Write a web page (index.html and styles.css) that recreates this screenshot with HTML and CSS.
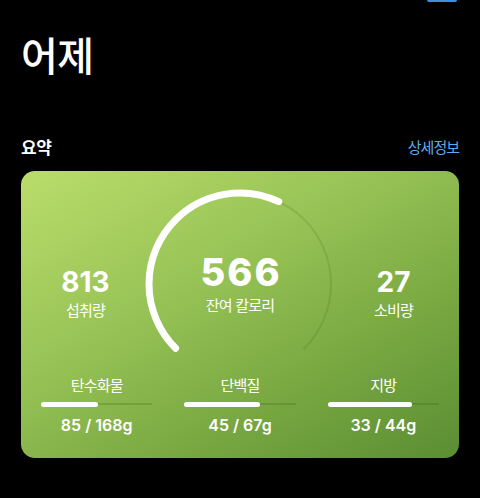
FILE: index.html
```html
<!DOCTYPE html>
<html lang="ko">
<head>
<meta charset="utf-8">
<link rel="stylesheet" href="styles.css">
</head>
<body>
<div class="page">
  <div class="topbar"><div class="topbtn"></div></div>
  <h1 class="title">어제</h1>
  <div class="section-head">
    <span class="section-title">요약</span>
    <span class="section-link">상세정보</span>
  </div>
  <div class="card">
    <div class="stats">
      <div class="stat stat-left">
        <div class="stat-num">813</div>
        <div class="stat-label">섭취량</div>
      </div>
      <div class="gauge">
        <svg class="gauge-svg" width="196" height="196" viewBox="0 0 196 196">
          <circle cx="98" cy="98" r="91" fill="none" stroke="rgba(40,80,10,0.14)" stroke-width="2" stroke-dasharray="428.8 600" transform="rotate(135 98 98)" stroke-linecap="round"/>
          <circle cx="98" cy="98" r="91" fill="none" stroke="#ffffff" stroke-width="7" stroke-dasharray="254 600" transform="rotate(135 98 98)" stroke-linecap="round"/>
        </svg>
        <div class="gauge-num">566</div>
        <div class="stat-label">잔여 칼로리</div>
      </div>
      <div class="stat stat-right">
        <div class="stat-num">27</div>
        <div class="stat-label">소비량</div>
      </div>
    </div>
    <div class="macros">
      <div class="macro">
        <div class="macro-label">탄수화물</div>
        <div class="bar"><div class="bar-fill" style="width:51%"></div></div>
        <div class="macro-val">85 / 168g</div>
      </div>
      <div class="macro">
        <div class="macro-label">단백질</div>
        <div class="bar"><div class="bar-fill" style="width:68%"></div></div>
        <div class="macro-val">45 / 67g</div>
      </div>
      <div class="macro">
        <div class="macro-label">지방</div>
        <div class="bar"><div class="bar-fill" style="width:76%"></div></div>
        <div class="macro-val">33 / 44g</div>
      </div>
    </div>
  </div>
</div>
</body>
</html>
```
FILE: styles.css
```css
html, body {
  margin: 0;
  padding: 0;
  background: #000;
  color: #fff;
  font-family: Inter, "Noto Sans CJK KR", sans-serif;
}
.page {
  width: 480px;
  height: 498px;
  padding: 0 21px;
  box-sizing: border-box;
  overflow: hidden;
}
.topbar {
  display: flex;
  justify-content: flex-end;
  height: 2px;
  padding-right: 2px;
}
.topbtn {
  width: 30px;
  height: 2px;
  background: #3f8fe0;
  border-radius: 0 0 2px 2px;
}
.title {
  margin: 26px 0 0 0;
  font-family: "Noto Sans CJK KR", sans-serif;
  font-size: 40px;
  font-weight: 500;
  line-height: 52px;
  letter-spacing: -0.5px;
}
.section-head {
  display: flex;
  justify-content: space-between;
  align-items: center;
  margin-top: 54px;
  height: 24px;
}
.section-title {
  font-family: "Noto Sans CJK KR", sans-serif;
  font-size: 17px;
  font-weight: 700;
  letter-spacing: -0.5px;
}
.section-link {
  font-family: "Noto Sans CJK KR", sans-serif;
  font-size: 15px;
  color: #5aaef0;
  letter-spacing: -1px;
}
.card {
  margin-top: 13px;
  height: 287px;
  border-radius: 14px;
  background: linear-gradient(150deg, #badd6b 0%, #96c255 40%, #78a741 70%, #5a8e33 100%);
  display: flex;
  flex-direction: column;
}
.stats {
  display: grid;
  grid-template-columns: 1fr 196px 1fr;
  padding: 15px 0 0 0;
  height: 183px;
}
.stat {
  display: flex;
  flex-direction: column;
  align-items: center;
  padding-top: 80px;
}
.stat-left { padding-left: 8px; }
.stat-right { padding-right: 10px; }
.stat-num {
  font-size: 28px;
  font-weight: 700;
  line-height: 32px;
}
.stat-label {
  font-family: "Noto Sans CJK KR", sans-serif;
  font-size: 15px;
  line-height: 20px;
  margin-top: 2px;
  letter-spacing: -0.8px;
}
.gauge {
  position: relative;
  display: flex;
  flex-direction: column;
  align-items: center;
  padding-top: 64px;
}
.gauge-svg {
  position: absolute;
  left: 0;
  top: 0;
}
.gauge-num {
  position: relative;
  font-size: 38px;
  font-weight: 800;
  line-height: 44px;
  letter-spacing: 2px;
  margin-right: -2px;
}
.gauge .stat-label {
  position: relative;
  margin-top: 1px;
}
.macros {
  display: grid;
  grid-template-columns: 1fr 1fr 1fr;
  column-gap: 32px;
  padding: 0 20px;
  margin-top: 6px;
}
.macro {
  display: flex;
  flex-direction: column;
  align-items: center;
}
.macro-label {
  font-family: "Noto Sans CJK KR", sans-serif;
  font-size: 15px;
  line-height: 20px;
  letter-spacing: -0.8px;
}
.bar {
  width: 100%;
  height: 2px;
  margin-top: 8px;
  background: rgba(40, 80, 10, 0.2);
  border-radius: 1px;
}
.bar-fill {
  height: 5px;
  margin-top: -1.5px;
  background: #fff;
  border-radius: 3px;
}
.macro-val {
  font-size: 16px;
  font-weight: 600;
  line-height: 20px;
  margin-top: 10px;
}
```
